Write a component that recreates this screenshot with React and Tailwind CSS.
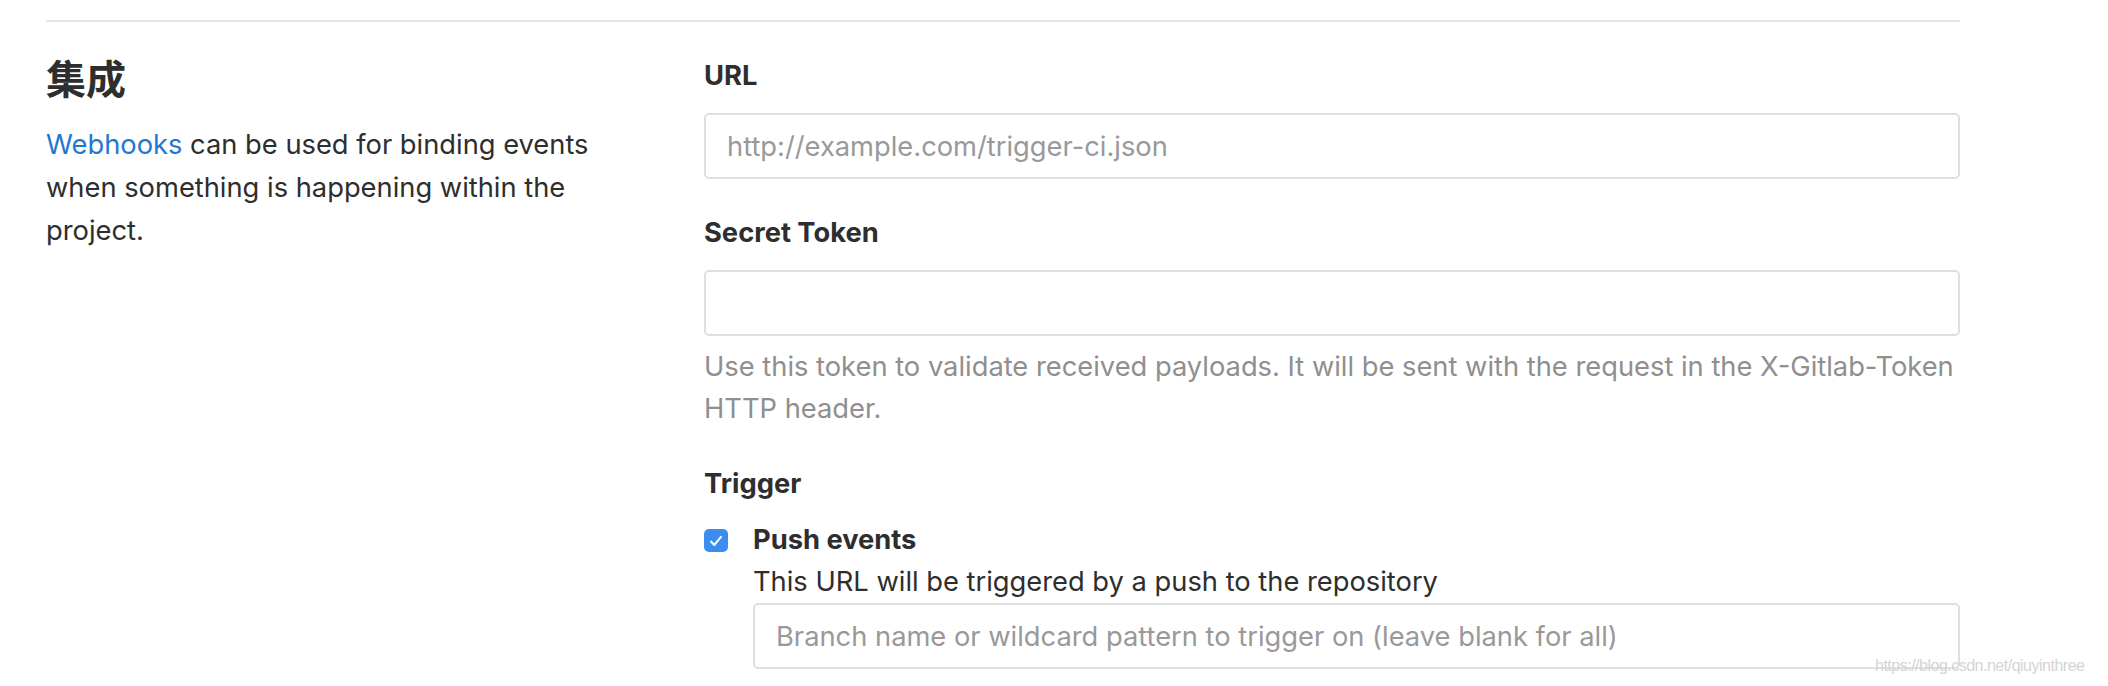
export default function App() {
  return (
    <div className="relative w-[2108px] h-[686px] bg-white overflow-hidden text-[#2e2e2e]" style={{ fontFamily: 'Inter, "Noto Sans CJK SC", sans-serif' }}>
      <div className="ml-[46px] w-[1914px] pt-[20px]">
        <div className="border-t-2 border-[#e5e5e5]" />

        <div className="flex">
          {/* left: section title + description */}
          <div className="w-[658px] shrink-0">
            <h4 className="mt-[31px] text-[40px] leading-[48px] font-bold text-[#2e2e2e]" style={{ fontFamily: '"Noto Sans CJK SC", sans-serif' }}>
              集成
            </h4>
            <p className="mt-[22px] w-[580px] text-[27.3px] leading-[43px]">
              <a href="#" className="text-[#1f78d1]">Webhooks</a> can be used for binding events when something is happening within the project.
            </p>
          </div>

          {/* right: form */}
          <div className="flex-1 text-[27.3px] leading-[42px]">
            <label className="block mt-[33px] font-bold">URL</label>
            <input
              type="text"
              placeholder="http://example.com/trigger-ci.json"
              className="mt-[16px] block w-full h-[66px] px-[21px] border-2 border-[#dfdfdf] rounded-[5px] text-[27.3px] placeholder:text-[#999] outline-none"
            />

            <label className="block mt-[33px] font-bold">Secret Token</label>
            <input
              type="text"
              className="mt-[16px] block w-full h-[66px] px-[21px] border-2 border-[#dfdfdf] rounded-[5px] text-[27.3px] outline-none"
            />
            <p className="mt-[10px] text-[#8f8f8f]">
              Use this token to validate received payloads. It will be sent with the request in the X-Gitlab-Token HTTP header.
            </p>

            <label className="block mt-[33px] font-bold">Trigger</label>
            <div className="mt-[14px] flex">
              <div className="w-[49px] shrink-0 pt-[10px]">
                <div className="w-[24px] h-[23px] rounded-[5px] bg-[#3b8df0] flex items-center justify-center">
                  <svg width="14" height="12" viewBox="0 0 14 12" fill="none">
                    <path d="M2 6.5 L5.3 10 L12 1.8" stroke="white" strokeWidth="2" strokeLinecap="round" strokeLinejoin="round" />
                  </svg>
                </div>
              </div>
              <div className="flex-1">
                <div className="font-bold">Push events</div>
                <div>This URL will be triggered by a push to the repository</div>
                <input
                  type="text"
                  placeholder="Branch name or wildcard pattern to trigger on (leave blank for all)"
                  className="block w-full h-[66px] px-[21px] border-2 border-[#dfdfdf] rounded-[5px] text-[27.3px] placeholder:text-[#999] outline-none"
                />
              </div>
            </div>
          </div>
        </div>
      </div>

      <span className="absolute left-[1875px] top-[656px] text-[16px] leading-[20px] text-[#d4d4d4] tracking-[-0.5px]" style={{ fontFamily: '"Liberation Sans", sans-serif' }}>
        https://blog.csdn.net/qiuyinthree
      </span>
    </div>
  );
}
